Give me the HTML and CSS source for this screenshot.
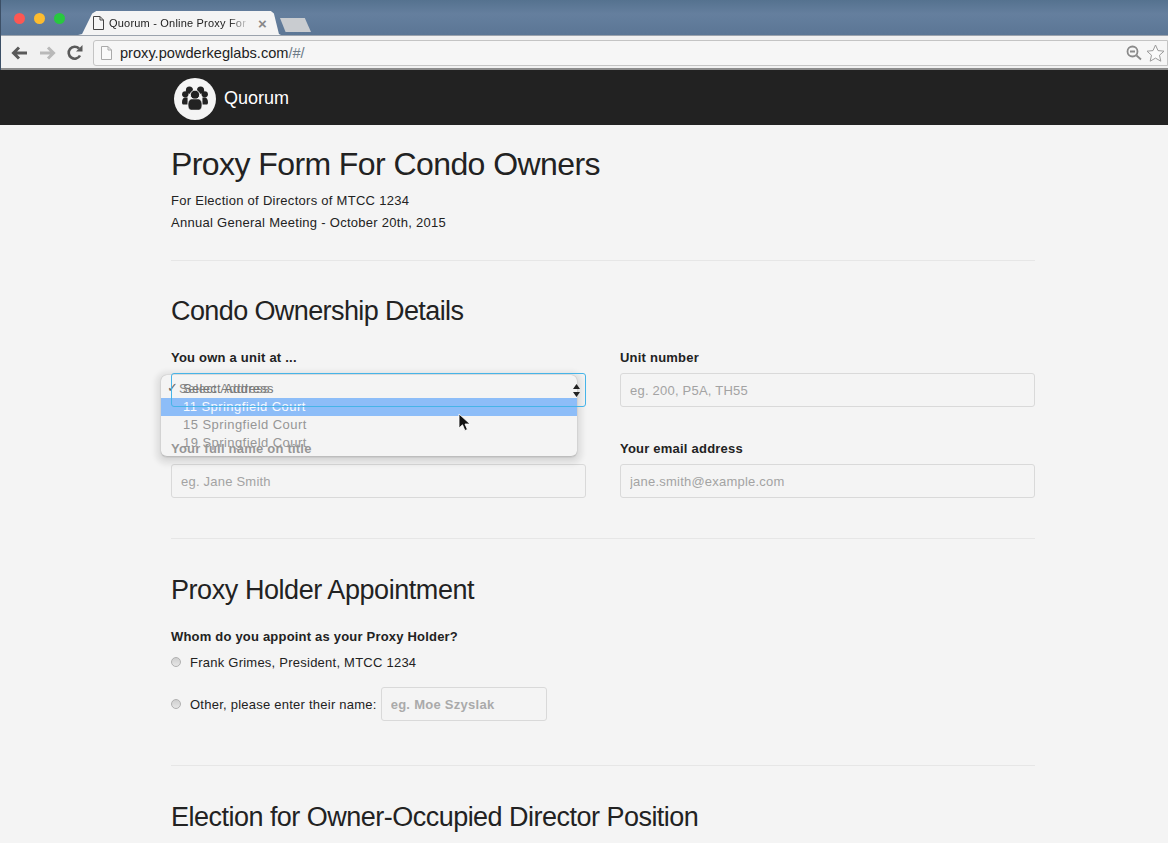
FILE: index.html
```html
<!DOCTYPE html>
<html lang="en">
<head>
<meta charset="utf-8">
<title>Quorum - Online Proxy Form</title>
<link rel="stylesheet" href="styles.css">
</head>
<body>
<div class="browser">
  <div class="tabstrip">
    <div class="lights"><i class="light red"></i><i class="light yellow"></i><i class="light green"></i></div>
    <div class="tab">
      <svg class="tab-doc" width="11" height="14" viewBox="0 0 11 14"><path d="M.5.5h6.500l3.500 3.500v9.500h-10z M7 .5v3.500h3.500" fill="#f6f6f6" stroke="#444" stroke-width="1"/></svg>
      <span class="tab-title">Quorum - Online Proxy For</span>
      <span class="tab-close">×</span>
    </div>
    <div class="newtab"></div>
  </div>
  <div class="toolbar">
    <svg class="navicon back" width="17" height="14" viewBox="0 0 17 14"><path d="M16 7H3M8 1.500 2.500 7 8 12.500" fill="none" stroke="#5a5a5a" stroke-width="3"/></svg>
    <svg class="navicon fwd" width="17" height="14" viewBox="0 0 17 14"><path d="M1 7h13M9 1.500 14.500 7 9 12.500" fill="none" stroke="#b9b9b9" stroke-width="3"/></svg>
    <svg class="navicon reload" width="16" height="16" viewBox="0 0 16 16"><path d="M13 10.500A6 6 0 1 1 12 3.500" fill="none" stroke="#5a5a5a" stroke-width="2.600"/><path d="M9 6.500h6.500V0z" fill="#5a5a5a"/></svg>
    <div class="omnibox">
      <svg class="url-doc" width="11" height="14" viewBox="0 0 11 14"><path d="M.5.500h6.500l3.500 3.500v9.500h-10z M7 .5v3.500h3.500" fill="#fafafa" stroke="#aaa"/></svg>
      <span class="url">proxy.powderkeglabs.com<span class="url-path">/#/</span></span>
      <svg class="zoom-icon" width="16" height="16" viewBox="0 0 16 16"><circle cx="6.500" cy="6.500" r="5" fill="none" stroke="#8a8a8a" stroke-width="1.800"/><path d="M4 6.500h5M10.500 10.500l4.500 4" stroke="#8a8a8a" stroke-width="1.800" fill="none"/></svg>
      <svg class="star-icon" width="19" height="18" viewBox="0 0 19 18"><path d="M9.500 1l2.500 5.600 6 .6-4.500 4 1.300 6-5.300-3.100-5.300 3.100 1.300-6-4.500-4 6-.6z" fill="#fbfbfb" stroke="#9a9a9a" stroke-width="1"/></svg>
    </div>
  </div>
</div>

<nav class="navbar">
  <div class="brand">
    <span class="logo">
      <svg width="26" height="25" viewBox="0 0 28 26">
        <g fill="#222">
          <circle cx="8" cy="4" r="3.800"/><circle cx="20" cy="4" r="3.800"/><circle cx="3.500" cy="8.500" r="3.400"/><circle cx="24.500" cy="8.500" r="3.400"/>
          <circle cx="14" cy="9" r="5" stroke="#f4f4f4" stroke-width="1"/>
          <path d="M0 17c0-3 1.500-5 3.500-5h2.500v7.500H1c-.6 0-1-1.300-1-2.500zM28 17c0-3-1.500-5-3.500-5H22v7.500h5c.6 0 1-1.300 1-2.500z"/>
          <path d="M6.500 20c0-4.500 2-6.500 4.500-6.500h6c2.500 0 4.500 2 4.500 6.500 0 3.500-1.500 5.500-3.500 5.500h-8c-2 0-3.500-2-3.500-5.500z" stroke="#f4f4f4" stroke-width=".6"/>
        </g>
      </svg>
    </span>
    <span class="brand-name">Quorum</span>
  </div>
</nav>

<main class="page">
  <header class="intro">
    <h1>Proxy Form For Condo Owners</h1>
    <p>For Election of Directors of MTCC 1234</p>
    <p>Annual General Meeting - October 20th, 2015</p>
  </header>
  <hr>
  <section class="ownership">
    <h2 class="condo-heading">Condo Ownership Details</h2>
    <div class="form-grid">
      <div class="field">
        <label>You own a unit at ...</label>
        <div class="select-wrap">
          <div class="select-box">
            <span class="select-text">Select Address</span>
            <svg class="select-arrows" width="7" height="13" viewBox="0 0 7 13"><path d="M3.500 0 7 5H0zM3.500 13 0 8h7z" fill="#222"/></svg>
          </div>
          <div class="dropdown">
            <div class="option checked"><span class="check">✓</span>Select Address</div>
            <div class="option active">11 Springfield Court</div>
            <div class="option">15 Springfield Court</div>
            <div class="option">19 Springfield Court</div>
          </div>
          <svg class="cursor" width="13" height="19" viewBox="0 0 13 19"><path d="M1 1v14l3.500-3.200 2.400 5.700 2.500-1-2.400-5.500H12z" fill="#111" stroke="#fff" stroke-width=".8"/></svg>
        </div>
      </div>
      <div class="field">
        <label>Unit number</label>
        <input class="text-input" type="text" placeholder="eg. 200, P5A, TH55">
      </div>
      <div class="field">
        <label>Your full name on title</label>
        <input class="text-input" type="text" placeholder="eg. Jane Smith">
      </div>
      <div class="field">
        <label>Your email address</label>
        <input class="text-input" type="text" placeholder="jane.smith@example.com">
      </div>
    </div>
  </section>
  <hr class="hr-second">
  <section class="holder">
    <h2 class="holder-heading">Proxy Holder Appointment</h2>
    <label class="question">Whom do you appoint as your Proxy Holder?</label>
    <div class="radio-row first"><i class="radio"></i><span>Frank Grimes, President, MTCC 1234</span></div>
    <div class="radio-row"><i class="radio"></i><span>Other, please enter their name:</span><input class="other-input" type="text" placeholder="eg. Moe Szyslak"></div>
  </section>
  <hr class="hr-third">
  <h2 class="last-heading">Election for Owner-Occupied Director Position</h2>
</main>
</body>
</html>
```
FILE: styles.css
```css
* { box-sizing: border-box; }
html, body { margin: 0; padding: 0; }
body {
  height: 843px;
  overflow: hidden;
  background: #f4f4f4;
  color: #222;
  font-family: "Liberation Sans", Arial, sans-serif;
  font-size: 14px;
}

/* browser chrome */
.browser { height: 70px; display: flex; flex-direction: column; border-left: 1px solid #3c4f66; }
.tabstrip {
  height: 35px;
  background: linear-gradient(#55728f, #657f9e 40%, #5b7695);
  display: flex;
  align-items: flex-end;
}
.lights { display: flex; gap: 9px; padding: 0 0 11px 13px; width: 77px; }
.light { width: 11px; height: 11px; border-radius: 50%; }
.red { background: #fc5753; }
.yellow { background: #fdbc2f; }
.green { background: #28c83f; }
.tab {
  width: 203px;
  height: 24px;
  padding: 0 14px 0 15px;
  background: #f4f4f4;
  display: flex;
  align-items: center;
  gap: 5px;
  clip-path: polygon(0 100%, 2% 96%, 7% 10%, 9% 0, 95% 0, 96.500% 10%, 99% 96%, 100% 100%);
  font-size: 11px;
  color: #222;
}
.tab-title {
  white-space: nowrap;
  width: 141px;
  overflow: hidden;
  letter-spacing: .2px;
  -webkit-mask-image: linear-gradient(90deg, #000 85%, transparent);
  mask-image: linear-gradient(90deg, #000 85%, transparent);
}
.tab-close { font-size: 15px; color: #888; font-weight: 700; margin-left: 3px; }
.newtab {
  width: 31px;
  height: 14px;
  margin: 0 0 3px -1px;
  background: #c9ccd0;
  clip-path: polygon(0 0, 80% 0, 100% 100%, 18% 100%);
}
.toolbar {
  height: 35px;
  background: #f1f1f1;
  border-top: 1px solid #9ba3ad;
  border-bottom: 2px solid #8d8d8d;
  display: flex;
  align-items: center;
  padding: 1px 0 0 10px;
  gap: 11px;
}
.navicon { flex: none; }
.omnibox {
  flex: 1;
  height: 26px;
  margin-left: -1px;
  background: #f6f6f6;
  border: 1px solid #c4c4c4;
  border-radius: 3px 0 0 3px;
  display: flex;
  align-items: center;
  padding: 0 2px 0 7px;
}
.url-doc { flex: none; }
.url { margin-left: 8px; font-size: 14.600px; color: #222; flex: 1; }
.url-path { color: #6c7a86; }
.zoom-icon { margin-right: 4px; }

/* navbar */
.navbar { height: 55px; background: #222; padding: 2px 0 0 174px; display: flex; align-items: center; }
.brand { display: flex; align-items: center; gap: 8px; }
.logo {
  width: 42px;
  height: 42px;
  border-radius: 50%;
  background: #f4f4f4;
  display: flex;
  align-items: center;
  justify-content: center;
}
.brand-name { color: #fff; font-size: 18px; }

/* page */
.page { width: 864px; margin-left: 171px; }
h1 { font-size: 32px; font-weight: 400; line-height: 36px; margin: 21px 0 0; letter-spacing: -.58px; }
h2 { font-size: 27px; font-weight: 400; line-height: 30px; margin: 0; letter-spacing: -.52px; }
.condo-heading { letter-spacing: -.6px; }
.holder-heading { letter-spacing: -.44px; }
p { margin: 0; line-height: 22px; font-size: 13px; letter-spacing: .28px; }
.intro h1 { margin-bottom: 8px; }
hr { border: 0; border-top: 1px solid #e6e6e6; margin: 0; }
.intro + hr { margin-top: 26px; }
.ownership { padding-top: 35px; }
.form-grid {
  display: grid;
  grid-template-columns: 415px 415px;
  column-gap: 34px;
  row-gap: 33px;
  margin-top: 23px;
}
.field label { margin-bottom: 6px; }
label { display: block; font-weight: 700; font-size: 13px; line-height: 18px; letter-spacing: .22px; color: #222; }
.text-input, .select-box {
  display: block;
  width: 100%;
  height: 34px;
  border: 1px solid #d9d9d9;
  border-radius: 3px;
  background: transparent;
  padding: 0 9px;
  font: 13px "Liberation Sans", Arial, sans-serif;
  letter-spacing: .22px;
  outline: 0;
}
::placeholder { color: #a3a3a3; opacity: 1; }

/* select and native menu */
.select-wrap { position: relative; height: 34px; }
.select-box {
  position: relative;
  z-index: 2;
  border: 1px solid #46b4e8;
  display: flex;
  align-items: center;
  justify-content: space-between;
  padding: 0 5px 4px 11px;
  color: #777;
  letter-spacing: .3px;
}
.select-arrows { margin-top: 4px; }
.dropdown {
  position: absolute;
  left: -10px;
  top: 2px;
  width: 416px;
  height: 82px;
  padding-top: 5px;
  background: rgba(244, 244, 244, .55);
  border-radius: 6px;
  border-bottom: 1px solid #bdbdbd;
  box-shadow: 0 0 1px rgba(0,0,0,.4), 0 2px 4px rgba(0,0,0,.08), 0 2px 5px 6px rgba(0,0,0,.065);
  font-size: 13px;
  letter-spacing: .44px;
  color: #969696;
  overflow: hidden;
}
.option { height: 18px; line-height: 18px; padding-left: 22px; position: relative; }
.option.checked { color: rgba(85, 85, 85, .7); padding-left: 18px; letter-spacing: .3px; }
.check { position: absolute; left: 6px; top: -1px; color: #666; font-size: 13px; font-family: "DejaVu Sans", sans-serif; }
.option.active { background: #8dbdf8; color: #f7faff; }
.cursor { position: absolute; left: 287px; top: 40px; z-index: 3; }

/* proxy holder */
.hr-second { margin-top: 40px; }
.holder { padding-top: 36px; }
.question { margin: 23px 0 0; line-height: 18px; letter-spacing: .2px; }
.radio-row { display: flex; align-items: center; height: 34px; font-size: 13px; letter-spacing: .24px; }
.radio-row.first { margin-top: -1px; }
.radio-row + .radio-row { margin-top: 8px; }
.radio {
  width: 10px;
  height: 10px;
  border-radius: 50%;
  background: linear-gradient(#cfcfcf, #e6e6e6);
  border: 1px solid #b0b0b0;
  margin-right: 9px;
  flex: none;
}
.other-input {
  width: 166px;
  height: 34px;
  margin-left: 4px;
  border: 1px solid #d9d9d9;
  border-radius: 3px;
  background: transparent;
  padding: 0 9px;
  font: 700 13px "Liberation Sans", Arial, sans-serif;
  letter-spacing: .27px;
}
.other-input::placeholder { color: #aaa; }
.hr-third { margin-top: 44px; }
.last-heading { margin-top: 36px; }
```
